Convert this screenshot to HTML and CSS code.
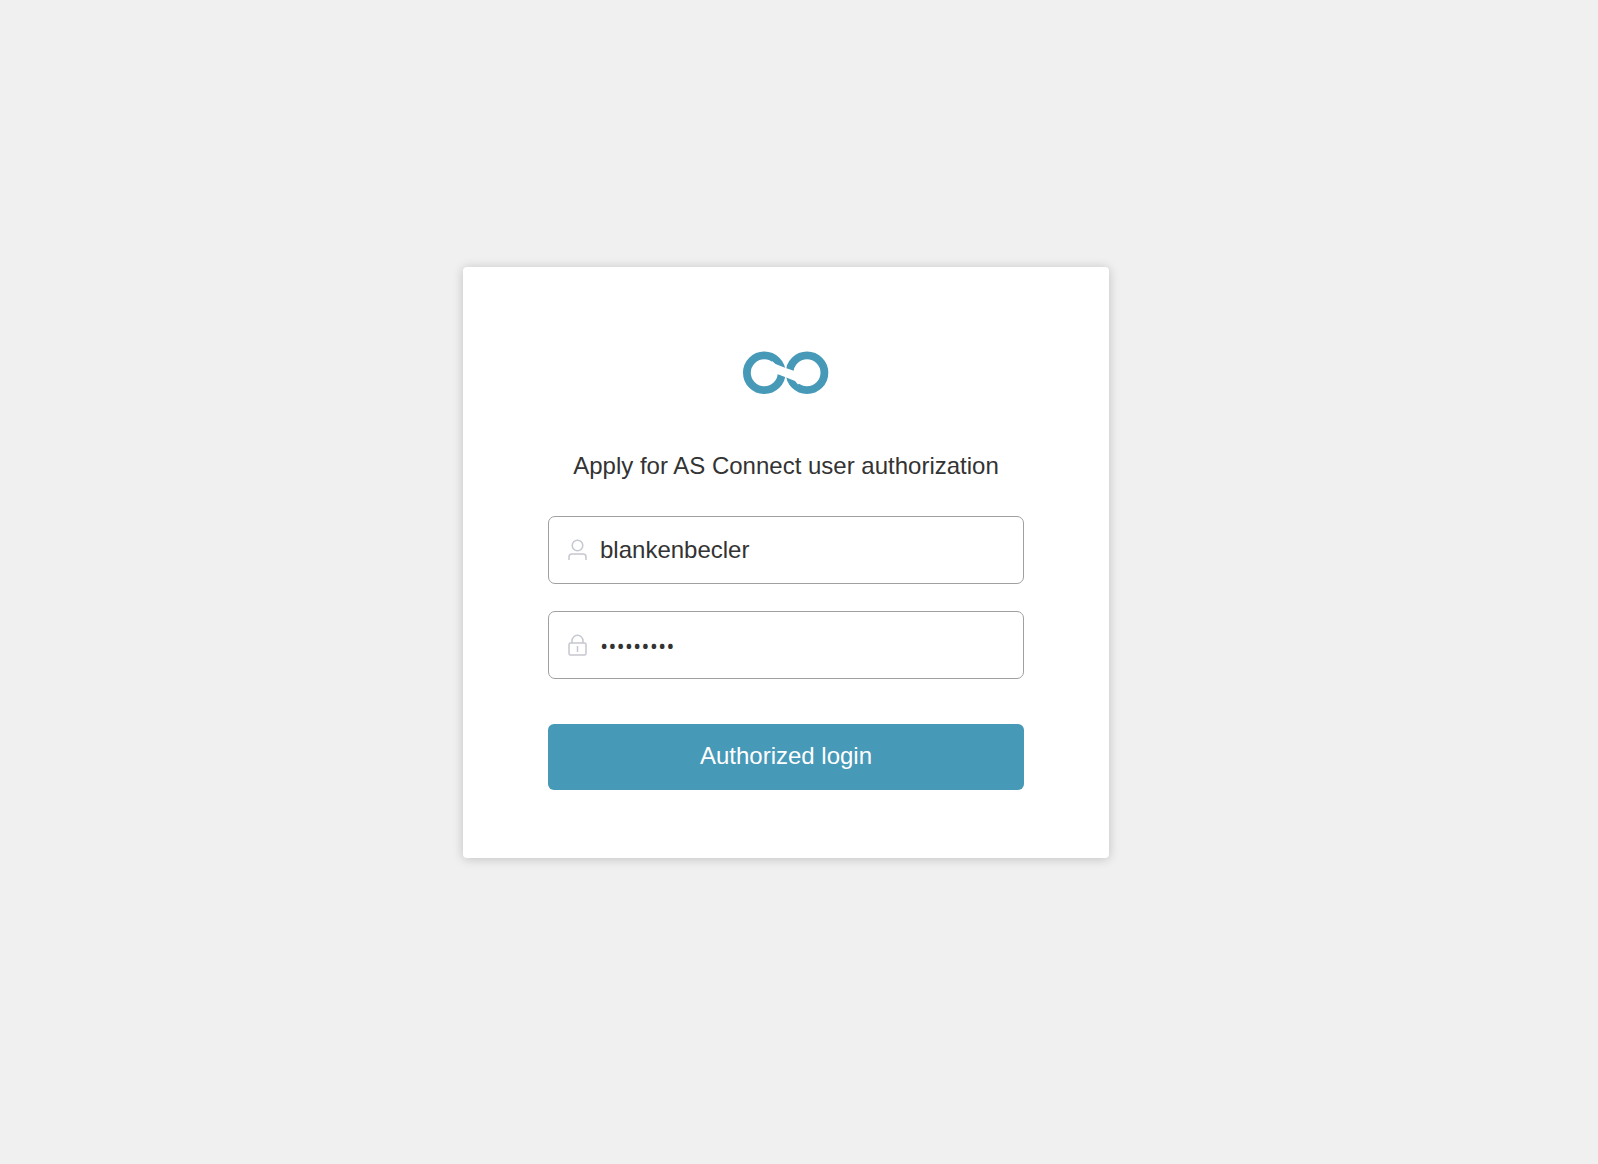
FILE: index.html
```html
<!DOCTYPE html>
<html lang="en">
<head>
	<meta charset="utf-8">
	<title>AS Connect</title>
	<link rel="stylesheet" href="styles.css">
</head>
<body>
	<form class="login" action="#">
		<svg class="logo" width="86" height="44" viewBox="0 0 86 44">
			<g fill="none" stroke="#4799b8" stroke-width="7.8">
				<circle cx="21.3" cy="21.7" r="17.4"/>
				<circle cx="64" cy="21.7" r="17.4"/>
			</g>
			<path fill="#fff" d="M29 10L32.5 13L42 16.8L50 19.5L62 23V29L55 33.5L52 30L42 26L29 21Z"/>
			<path stroke="#fff" d="M42.7 12V32"/>
		</svg>
		<h1>Apply for AS Connect user authorization</h1>
		<label class="field">
			<svg width="20" height="22" viewBox="0 0 20 22">
				<circle cx="9.5" cy="6.5" r="5.3"/>
				<path d="M1 21V18Q1 15 4 15H15Q18 15 18 18V21"/>
			</svg>
			<input type="text" name="user" value="blankenbecler" aria-label="User name">
		</label>
		<label class="field">
			<svg width="20" height="22" viewBox="0 0 20 22">
				<rect x="1" y="9" width="17" height="12" rx="1.5"/>
				<path d="M4 9V6.8A5.5 5.5 0 0 1 15 6.8V9M9.5 12V18"/>
			</svg>
			<input type="password" name="password" value="connect12" aria-label="Password">
		</label>
		<button class="btn" type="submit">Authorized login</button>
	</form>
</body>
</html>
```

FILE: styles.css
```css
*{margin: 0;padding: 0;box-sizing: border-box;}
body{display: flex;min-height: 100vh;padding: 0 26px 40px 0;background: #f0f0f0;color: #333;font: 24px/32px "Liberation Sans", Arial, sans-serif;}
.login{display: flex;flex-direction: column;width: 100%;max-width: 646px;margin: auto;padding: 84px 85px 68px;background: #fff;border-radius: 4px;box-shadow: 0 1px 11px rgba(0,0,0,.2);}
.logo{align-self: center;}
.login h1{margin: 55px 0 34px;font-size: 24px;font-weight: normal;text-align: center;}
.field{display: flex;align-items: center;height: 68px;margin-bottom: 27px;padding: 0 19px;border: 1px solid #a0a0a0;border-radius: 7px;cursor: text;}
.field svg{flex: none;margin-right: 12px;fill: none;stroke: #c5c8d0;stroke-width: 1.5;}
.field input{flex: 1;min-width: 0;border: 0;outline: 0;background: none;color: inherit;font: inherit;}
.field input[type=password]{font: 22px/32px "Open Sans", sans-serif;}
.btn{height: 66px;margin-top: 18px;padding-bottom: 2px;border: 0;border-radius: 6px;background: #4799b8;color: #fff;font: inherit;cursor: pointer;}
```
